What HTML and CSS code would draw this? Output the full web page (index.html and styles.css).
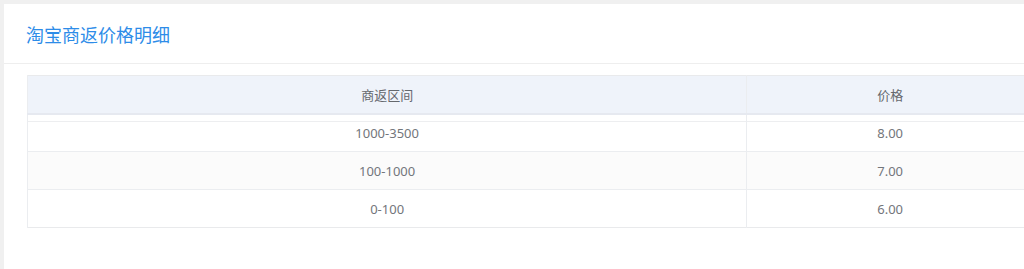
FILE: index.html
```html
<!DOCTYPE html>
<html lang="zh-CN">
<head>
<meta charset="utf-8">
<title>淘宝商返价格明细</title>
<link rel="stylesheet" href="styles.css">
</head>
<body>
<div class="page">
  <div class="panel">
    <div class="panel-head">
      <h2 class="panel-title">淘宝商返价格明细</h2>
    </div>
    <div class="panel-body">
      <table class="grid">
        <colgroup>
          <col class="col-range">
          <col class="col-price">
        </colgroup>
        <thead>
          <tr><th>商返区间</th><th>价格</th></tr>
        </thead>
        <tbody>
          <tr class="first"><td>1000-3500</td><td>8.00</td></tr>
          <tr class="striped"><td>100-1000</td><td>7.00</td></tr>
          <tr><td>0-100</td><td>6.00</td></tr>
        </tbody>
      </table>
    </div>
  </div>
</div>
</body>
</html>
```

FILE: styles.css
```css
html, body {
  margin: 0;
  padding: 0;
  overflow: hidden;
  background: #f0f0f0;
  font-family: "Noto Sans", "Open Sans", "Noto Sans CJK SC", sans-serif;
}

.page {
  padding: 4px 0 0 4px;
  height: 269px;
  box-sizing: border-box;
}

.panel {
  width: 1053px;
  min-height: 265px;
  background: #ffffff;
}

.panel-head {
  height: 59px;
  border-bottom: 1px solid #eeeeee;
  display: flex;
  align-items: center;
  padding-left: 22px;
}

.panel-title {
  margin: 0;
  font-family: "Noto Sans CJK SC", sans-serif;
  font-size: 18px;
  font-weight: 400;
  color: #2d8ce8;
  line-height: 24px;
  padding-top: 1px;
}

.panel-body {
  padding: 11px 23px 0 23px;
}

.grid {
  width: 1007px;
  border-collapse: collapse;
  border: 1px solid #e9eaec;
  font-size: 13px;
  color: #73767b;
}

.col-range { width: 720px; }
.col-price { width: 287px; }

.grid th,
.grid td {
  text-align: center;
  padding: 0;
  border-left: 1px solid #ebedf0;
}

.grid th {
  height: 37px;
  background: #eff3fa;
  font-weight: 400;
  font-family: "Noto Sans CJK SC", sans-serif;
  color: #65686d;
  border-bottom: 2px solid #e6e9f0;
}

.grid td {
  height: 37px;
  border-top: 1px solid #ebedf0;
}

.grid tr.first td {
  height: 36px;
  border-top: none;
  background: linear-gradient(to bottom, #ffffff 0, #ffffff 6px, #edeef0 6px, #edeef0 7px, #ffffff 7px);
}

.grid tr.striped td {
  background: #fbfbfb;
}
```
